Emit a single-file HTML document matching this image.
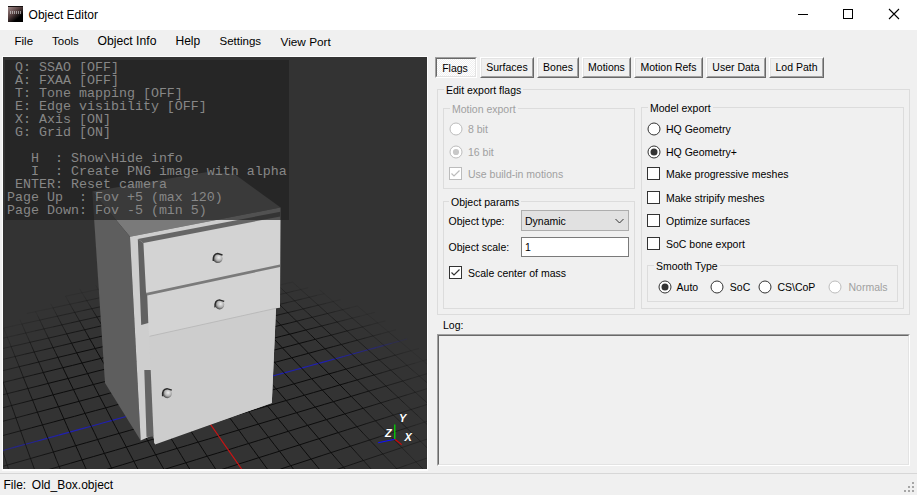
<!DOCTYPE html><html><head><meta charset="utf-8"><style>
html,body{margin:0;padding:0;width:917px;height:495px;overflow:hidden;background:#f0f0f0;font-family:"Liberation Sans", sans-serif}
.t{position:absolute;white-space:pre;font-family:"Liberation Sans", sans-serif}
</style></head><body><div style="position:absolute;left:0px;top:0px;width:917px;height:30px;background:#fff"></div><div style="position:absolute;left:8px;top:6px;width:15px;height:16px;background:linear-gradient(140deg,#a48c8c 0%,#5a4444 38%,#000 72%);border-top:1px solid #151010;box-sizing:border-box"></div><div style="position:absolute;left:10px;top:11px;width:12px;height:3px;background:repeating-linear-gradient(90deg,#ddd 0 1px,transparent 1px 2px,#ddd 2px 3px,transparent 3px 4px);opacity:.6"></div><div class="t" style="left:28.60px;top:7.84px;font-size:12px;line-height:14.40px;color:#000;">Object Editor</div><div style="position:absolute;left:798px;top:14px;width:10px;height:1px;background:#000"></div><div style="position:absolute;left:843px;top:9px;width:8px;height:8px;border:1px solid #000"></div><svg style="position:absolute;left:888px;top:8px" width="12" height="12"><path d="M1 1 L11 11 M11 1 L1 11" stroke="#000" stroke-width="1.1"/></svg><div style="position:absolute;left:0px;top:30px;width:917px;height:27px;background:#f0f0f0"></div><div class="t" style="left:14.50px;top:34.92px;font-size:11.5px;line-height:13.80px;color:#000;">File</div><div class="t" style="left:52.00px;top:34.92px;font-size:11.5px;line-height:13.80px;color:#000;">Tools</div><div class="t" style="left:97.50px;top:34.25px;font-size:12.2px;line-height:14.64px;color:#000;">Object Info</div><div class="t" style="left:175.50px;top:34.44px;font-size:12px;line-height:14.40px;color:#000;">Help</div><div class="t" style="left:219.50px;top:34.92px;font-size:11.5px;line-height:13.80px;color:#000;">Settings</div><div class="t" style="left:280.50px;top:34.63px;font-size:11.8px;line-height:14.16px;color:#000;">View Port</div><div style="position:absolute;left:2px;top:56px;width:426px;height:415px;background:#fcfcfc"></div><svg style="position:absolute;left:3px;top:57px" width="424" height="412" viewBox="3 57 424 412"><rect x="3" y="57" width="424" height="412" fill="#333"/><path d="M407.2 338.9L399.5 341.1" stroke="#2020b0" stroke-opacity="0.10" stroke-width="1.1" fill="none"/><path d="M399.5 341.1L391.7 343.2" stroke="#2020b0" stroke-opacity="0.20" stroke-width="1.1" fill="none"/><path d="M391.7 343.2L383.9 345.4" stroke="#2020b0" stroke-opacity="0.30" stroke-width="1.1" fill="none"/><path d="M383.9 345.4L376.0 347.6" stroke="#2020b0" stroke-opacity="0.40" stroke-width="1.1" fill="none"/><path d="M376.0 347.6L368.0 349.8" stroke="#2020b0" stroke-opacity="0.50" stroke-width="1.1" fill="none"/><path d="M368.0 349.8L359.9 352.0M14.1 447.4L2.6 450.6" stroke="#2020b0" stroke-opacity="0.60" stroke-width="1.1" fill="none"/><path d="M359.9 352.0L351.8 354.2M25.4 444.3L14.1 447.4" stroke="#2020b0" stroke-opacity="0.70" stroke-width="1.1" fill="none"/><path d="M351.8 354.2L343.6 356.5M36.7 441.2L25.4 444.3" stroke="#2020b0" stroke-opacity="0.80" stroke-width="1.1" fill="none"/><path d="M343.6 356.5L335.4 358.8M335.4 358.8L327.0 361.1M58.8 435.1L47.8 438.1M47.8 438.1L36.7 441.2" stroke="#2020b0" stroke-opacity="0.90" stroke-width="1.1" fill="none"/><path d="M327.0 361.1L318.6 363.4M318.6 363.4L310.1 365.7M310.1 365.7L301.6 368.1M301.6 368.1L292.9 370.5M292.9 370.5L284.2 372.9M284.2 372.9L275.4 375.3M275.4 375.3L266.5 377.8M266.5 377.8L257.5 380.2M257.5 380.2L248.5 382.7M248.5 382.7L239.4 385.3M239.4 385.3L230.1 387.8M230.1 387.8L220.8 390.4M220.8 390.4L211.4 393.0M211.4 393.0L201.9 395.6M201.9 395.6L192.3 398.2M192.3 398.2L182.7 400.9M182.7 400.9L172.9 403.6M172.9 403.6L163.0 406.3M163.0 406.3L153.1 409.1M153.1 409.1L143.0 411.9M143.0 411.9L132.9 414.7M132.9 414.7L122.6 417.5M122.6 417.5L112.2 420.4M112.2 420.4L101.8 423.2M101.8 423.2L91.2 426.2M91.2 426.2L80.5 429.1M80.5 429.1L69.7 432.1M69.7 432.1L58.8 435.1" stroke="#2020b0" stroke-opacity="1.00" stroke-width="1.1" fill="none"/><path d="M176.1 272.9L168.5 274.5M168.5 274.5L161.0 276.1M161.0 276.1L153.3 277.7M153.3 277.7L145.7 279.3M145.7 279.3L137.9 280.9M137.9 280.9L130.1 282.6M114.3 285.9L106.4 287.6M106.4 287.6L98.3 289.3M98.3 289.3L90.2 291.0M90.2 291.0L82.0 292.8M82.0 292.8L73.8 294.5M73.8 294.5L65.5 296.2M357.4 306.0L362.3 310.1M362.3 310.1L367.3 314.3M367.3 314.3L372.5 318.5M372.5 318.5L377.7 322.9M377.7 322.9L383.0 327.3M383.0 327.3L388.4 331.8M399.5 341.1L405.2 345.8M405.2 345.8L411.0 350.7M411.0 350.7L417.0 355.7M417.0 355.7L423.0 360.7M423.0 360.7L429.2 365.9M219.4 272.0L212.1 273.5M212.1 273.5L204.7 275.1M204.7 275.1L197.3 276.7M53.0 307.9L44.3 309.7M44.3 309.7L35.6 311.6M35.6 311.6L26.9 313.5M319.7 289.9L324.1 293.7M324.1 293.7L328.6 297.6M328.6 297.6L333.2 301.5M248.3 274.2L241.0 275.8M241.0 275.8L233.7 277.4M21.9 324.0L12.8 326.0M12.8 326.0L3.7 328.0M292.6 282.1L296.7 285.8M296.7 285.8L300.8 289.5M270.2 278.1L262.9 279.7M270.2 278.1L274.1 281.7M292.6 282.1L285.3 283.7M285.3 283.7L278.0 285.4M248.3 274.2L251.9 277.8M251.9 277.8L255.6 281.4M308.1 287.8L300.8 289.5M230.2 273.9L233.7 277.4M324.1 293.7L316.8 295.4M212.1 273.5L215.4 277.1M340.5 299.7L333.2 301.5M194.1 273.2L197.3 276.7M357.4 306.0L350.0 307.8M176.1 272.9L179.1 276.4M374.8 312.4L367.3 314.3M367.3 314.3L359.9 316.2M158.1 272.5L161.0 276.1M161.0 276.1L163.9 279.6M385.2 320.9L377.7 322.9M142.9 275.7L145.7 279.3M396.0 329.8L388.4 331.8M127.4 279.0L130.1 282.6M418.8 348.5L411.0 350.7M95.9 285.6L98.3 289.3M430.9 358.4L423.0 360.7M423.0 360.7L415.1 363.1M79.7 288.9L82.0 292.8M82.0 292.8L84.4 296.6M65.5 296.2L67.8 300.2M50.8 303.8L53.0 307.9M35.6 311.6L37.7 315.8M19.9 319.7L21.9 324.0M3.7 328.0L5.5 332.6M5.5 332.6L7.3 337.2" stroke="#0c0c0c" stroke-opacity="0.10" stroke-width="1.0" fill="none"/><path d="M130.1 282.6L122.3 284.2M122.3 284.2L114.3 285.9M388.4 331.8L393.9 336.4M393.9 336.4L399.5 341.1M197.3 276.7L189.7 278.4M189.7 278.4L182.2 280.0M182.2 280.0L174.6 281.6M78.5 302.4L70.0 304.2M70.0 304.2L61.5 306.0M61.5 306.0L53.0 307.9M333.2 301.5L337.8 305.6M337.8 305.6L342.6 309.7M342.6 309.7L347.4 313.9M413.1 370.7L419.3 376.0M419.3 376.0L425.6 381.5M425.6 381.5L432.1 387.1M233.7 277.4L226.3 279.0M226.3 279.0L218.8 280.7M39.8 320.1L30.8 322.1M30.8 322.1L21.9 324.0M300.8 289.5L305.1 293.3M305.1 293.3L309.4 297.2M262.9 279.7L255.6 281.4M255.6 281.4L248.3 283.0M16.6 335.1L7.3 337.2M7.3 337.2L-2.1 339.3M274.1 281.7L278.0 285.4M278.0 285.4L282.0 289.1M278.0 285.4L270.7 287.1M255.6 281.4L259.4 285.0M300.8 289.5L293.5 291.2M233.7 277.4L237.2 281.0M316.8 295.4L309.4 297.2M215.4 277.1L218.8 280.7M333.2 301.5L325.8 303.4M197.3 276.7L200.5 280.3M350.0 307.8L342.6 309.7M179.1 276.4L182.2 280.0M359.9 316.2L352.3 318.1M163.9 279.6L166.9 283.3M377.7 322.9L370.1 324.9M145.7 279.3L148.5 282.9M388.4 331.8L380.7 333.9M130.1 282.6L132.8 286.3M411.0 350.7L403.2 352.9M98.3 289.3L100.8 293.1M415.1 363.1L407.0 365.4M84.4 296.6L86.8 300.6M427.5 373.6L419.3 376.0M67.8 300.2L70.0 304.2M432.1 387.1L423.8 389.7M53.0 307.9L55.2 312.0M37.7 315.8L39.8 320.1M21.9 324.0L23.8 328.5M7.3 337.2L9.2 341.8M434.9 455.4L425.5 458.6" stroke="#0c0c0c" stroke-opacity="0.20" stroke-width="1.0" fill="none"/><path d="M174.6 281.6L166.9 283.3M166.9 283.3L159.2 285.0M159.2 285.0L151.4 286.6M151.4 286.6L143.5 288.3M143.5 288.3L135.6 290.0M135.6 290.0L127.6 291.8M127.6 291.8L119.6 293.5M119.6 293.5L111.5 295.2M111.5 295.2L103.3 297.0M103.3 297.0L95.1 298.8M95.1 298.8L86.8 300.6M86.8 300.6L78.5 302.4M347.4 313.9L352.3 318.1M352.3 318.1L357.3 322.4M357.3 322.4L362.5 326.9M362.5 326.9L367.7 331.4M367.7 331.4L373.0 335.9M373.0 335.9L378.4 340.6M378.4 340.6L383.9 345.4M383.9 345.4L389.5 350.2M389.5 350.2L395.2 355.2M395.2 355.2L401.1 360.2M401.1 360.2L407.0 365.4M407.0 365.4L413.1 370.7M218.8 280.7L211.4 282.3M211.4 282.3L203.8 284.0M57.4 316.2L48.6 318.1M48.6 318.1L39.8 320.1M309.4 297.2L313.8 301.2M313.8 301.2L318.3 305.2M415.3 392.3L421.8 398.1M421.8 398.1L428.5 404.0M248.3 283.0L240.9 284.7M240.9 284.7L233.4 286.4M35.0 330.9L25.8 333.0M25.8 333.0L16.6 335.1M282.0 289.1L286.1 293.0M286.1 293.0L290.3 296.8M417.8 415.7L424.6 422.1M424.6 422.1L431.6 428.6M270.7 287.1L263.3 288.8M11.1 346.6L1.6 348.8M259.4 285.0L263.3 288.8M420.5 441.3L427.6 448.3M293.5 291.2L286.1 293.0M286.1 293.0L278.7 294.7M5.3 358.8L-4.5 361.0M237.2 281.0L240.9 284.7M240.9 284.7L244.5 288.4M408.9 454.7L416.0 461.9M416.0 461.9L423.4 469.4M309.4 297.2L302.0 299.0M218.8 280.7L222.3 284.3M325.8 303.4L318.3 305.2M200.5 280.3L203.8 284.0M342.6 309.7L335.1 311.6M182.2 280.0L185.3 283.6M352.3 318.1L344.7 320.1M166.9 283.3L169.9 287.0M370.1 324.9L362.5 326.9M148.5 282.9L151.4 286.6M380.7 333.9L373.0 335.9M132.8 286.3L135.6 290.0M403.2 352.9L395.2 355.2M100.8 293.1L103.3 297.0M407.0 365.4L398.9 367.8M86.8 300.6L89.3 304.6M419.3 376.0L411.1 378.5M70.0 304.2L72.3 308.3M423.8 389.7L415.3 392.3M55.2 312.0L57.4 316.2M428.5 404.0L419.8 406.8M39.8 320.1L41.9 324.5M433.4 419.2L424.6 422.1M424.6 422.1L415.7 425.0M23.8 328.5L25.8 333.0M25.8 333.0L27.9 337.6M429.6 438.3L420.5 441.3M9.2 341.8L11.1 346.6M425.5 458.6L416.0 461.9M416.0 461.9L406.4 465.3" stroke="#0c0c0c" stroke-opacity="0.30" stroke-width="1.0" fill="none"/><path d="M203.8 284.0L196.2 285.7M196.2 285.7L188.5 287.3M188.5 287.3L180.8 289.0M83.3 310.5L74.7 312.4M74.7 312.4L66.1 314.3M66.1 314.3L57.4 316.2M318.3 305.2L322.9 309.3M322.9 309.3L327.5 313.5M327.5 313.5L332.3 317.7M396.7 375.5L402.8 381.0M402.8 381.0L409.0 386.6M409.0 386.6L415.3 392.3M233.4 286.4L225.8 288.1M225.8 288.1L218.2 289.8M53.0 326.9L44.0 328.9M44.0 328.9L35.0 330.9M290.3 296.8L294.5 300.8M294.5 300.8L298.8 304.8M404.6 403.5L411.1 409.5M411.1 409.5L417.8 415.7M263.3 288.8L255.8 290.5M255.8 290.5L248.3 292.2M30.0 342.3L20.6 344.5M20.6 344.5L11.1 346.6M263.3 288.8L267.2 292.6M267.2 292.6L271.2 296.5M406.6 427.9L413.5 434.6M413.5 434.6L420.5 441.3M278.7 294.7L271.2 296.5M15.1 356.5L5.3 358.8M244.5 288.4L248.3 292.2M401.8 447.6L408.9 454.7M302.0 299.0L294.5 300.8M294.5 300.8L287.0 302.6M9.3 369.1L-0.7 371.5M222.3 284.3L225.8 288.1M225.8 288.1L229.4 291.9M389.7 461.2L396.7 468.6M396.7 468.6L403.9 476.2M318.3 305.2L310.8 307.0M203.8 284.0L207.2 287.7M335.1 311.6L327.5 313.5M185.3 283.6L188.5 287.3M344.7 320.1L337.1 322.0M169.9 287.0L173.0 290.8M362.5 326.9L354.8 328.9M151.4 286.6L154.3 290.4M373.0 335.9L365.2 338.0M135.6 290.0L138.4 293.9M395.2 355.2L387.2 357.5M103.3 297.0L105.9 300.9M398.9 367.8L390.7 370.1M89.3 304.6L91.8 308.7M411.1 378.5L402.8 381.0M72.3 308.3L74.7 312.4M415.3 392.3L406.8 394.9M57.4 316.2L59.6 320.5M419.8 406.8L411.1 409.5M411.1 409.5L402.3 412.3M41.9 324.5L44.0 328.9M44.0 328.9L46.2 333.4M415.7 425.0L406.6 427.9M27.9 337.6L30.0 342.3M420.5 441.3L411.2 444.4M411.2 444.4L401.8 447.6M11.1 346.6L13.1 351.5M13.1 351.5L15.1 356.5M406.4 465.3L396.7 468.6M396.7 468.6L386.9 472.0" stroke="#0c0c0c" stroke-opacity="0.40" stroke-width="1.0" fill="none"/><path d="M180.8 289.0L173.0 290.8M173.0 290.8L165.2 292.5M165.2 292.5L157.3 294.2M157.3 294.2L149.3 296.0M149.3 296.0L141.3 297.7M141.3 297.7L133.2 299.5M133.2 299.5L125.0 301.3M125.0 301.3L116.8 303.1M116.8 303.1L108.5 305.0M108.5 305.0L100.2 306.8M100.2 306.8L91.8 308.7M91.8 308.7L83.3 310.5M332.3 317.7L337.1 322.0M337.1 322.0L342.0 326.4M342.0 326.4L347.0 330.9M347.0 330.9L352.1 335.5M352.1 335.5L357.3 340.2M357.3 340.2L362.6 344.9M362.6 344.9L368.0 349.8M368.0 349.8L373.5 354.7M373.5 354.7L379.1 359.8M379.1 359.8L384.8 364.9M384.8 364.9L390.7 370.1M390.7 370.1L396.7 375.5M218.2 289.8L210.6 291.5M210.6 291.5L202.9 293.2M70.8 322.9L61.9 324.9M61.9 324.9L53.0 326.9M298.8 304.8L303.2 308.9M303.2 308.9L307.7 313.0M392.0 391.7L398.3 397.5M398.3 397.5L404.6 403.5M248.3 292.2L240.7 294.0M240.7 294.0L233.1 295.7M48.5 338.1L39.3 340.2M39.3 340.2L30.0 342.3M271.2 296.5L275.2 300.4M275.2 300.4L279.4 304.4M393.4 415.1L400.0 421.5M400.0 421.5L406.6 427.9M271.2 296.5L263.6 298.2M24.7 354.2L15.1 356.5M248.3 292.2L252.1 296.1M395.0 440.7L401.8 447.6M287.0 302.6L279.4 304.4M19.2 366.7L9.3 369.1M229.4 291.9L233.1 295.7M382.8 454.0L389.7 461.2M310.8 307.0L303.2 308.9M303.2 308.9L295.6 310.8M13.4 379.9L3.2 382.4M3.2 382.4L-7.1 384.9M207.2 287.7L210.6 291.5M210.6 291.5L214.1 295.3M370.1 467.9L377.0 475.5M327.5 313.5L319.9 315.4M319.9 315.4L312.2 317.3M7.2 393.7L-3.2 396.3M188.5 287.3L191.8 291.1M191.8 291.1L195.1 295.0M337.1 322.0L329.4 324.0M173.0 290.8L176.2 294.6M354.8 328.9L347.0 330.9M154.3 290.4L157.3 294.2M365.2 338.0L357.3 340.2M138.4 293.9L141.3 297.7M387.2 357.5L379.1 359.8M7.2 465.1L-4.7 468.4M105.9 300.9L108.5 305.0M390.7 370.1L382.4 372.6M91.8 308.7L94.3 312.8M402.8 381.0L394.4 383.5M394.4 383.5L385.9 386.0M74.7 312.4L77.1 316.6M77.1 316.6L79.6 320.9M406.8 394.9L398.3 397.5M398.3 397.5L389.6 400.2M59.6 320.5L61.9 324.9M61.9 324.9L64.3 329.3M402.3 412.3L393.4 415.1M46.2 333.4L48.5 338.1M406.6 427.9L397.5 430.9M30.0 342.3L32.1 347.1M401.8 447.6L392.4 450.8M392.4 450.8L382.8 454.0M15.1 356.5L17.1 361.5M17.1 361.5L19.2 366.7M1.2 376.9L3.2 382.4M3.2 382.4L5.2 388.0M2.6 450.6L4.9 457.8M4.9 457.8L7.2 465.1M7.2 465.1L9.6 472.6" stroke="#0c0c0c" stroke-opacity="0.50" stroke-width="1.0" fill="none"/><path d="M202.9 293.2L195.1 295.0M195.1 295.0L187.3 296.7M187.3 296.7L179.4 298.5M96.9 317.0L88.2 319.0M88.2 319.0L79.6 320.9M79.6 320.9L70.8 322.9M307.7 313.0L312.2 317.3M312.2 317.3L316.8 321.6M316.8 321.6L321.6 326.0M374.1 375.0L379.9 380.4M379.9 380.4L385.9 386.0M385.9 386.0L392.0 391.7M233.1 295.7L225.4 297.5M225.4 297.5L217.6 299.3M66.7 333.9L57.6 336.0M57.6 336.0L48.5 338.1M279.4 304.4L283.6 308.5M283.6 308.5L287.9 312.6M380.8 402.9L387.1 408.9M387.1 408.9L393.4 415.1M263.6 298.2L256.0 300.0M256.0 300.0L248.3 301.8M43.7 349.8L34.2 352.0M34.2 352.0L24.7 354.2M252.1 296.1L256.0 300.0M256.0 300.0L260.0 304.0M381.8 427.3L388.3 433.9M388.3 433.9L395.0 440.7M279.4 304.4L271.7 306.2M29.0 364.4L19.2 366.7M233.1 295.7L236.8 299.6M376.2 446.9L382.8 454.0M295.6 310.8L287.9 312.6M23.4 377.4L13.4 379.9M214.1 295.3L217.6 299.3M363.4 460.5L370.1 467.9M312.2 317.3L304.5 319.2M17.6 391.1L7.2 393.7M195.1 295.0L198.5 298.9M329.4 324.0L321.6 326.0M11.5 405.5L0.8 408.3M176.2 294.6L179.4 298.5M347.0 330.9L339.2 333.0M339.2 333.0L331.3 335.1M15.9 417.9L5.0 420.7M5.0 420.7L-6.0 423.6M157.3 294.2L160.3 298.1M160.3 298.1L163.4 302.1M357.3 340.2L349.4 342.3M9.4 433.8L-1.8 436.8M141.3 297.7L144.2 301.7M379.1 359.8L371.0 362.1M371.0 362.1L362.7 364.4M30.5 458.5L18.9 461.8M18.9 461.8L7.2 465.1M108.5 305.0L111.2 309.0M111.2 309.0L113.9 313.2M382.4 372.6L374.1 375.0M94.3 312.8L96.9 317.0M385.9 386.0L377.4 388.6M79.6 320.9L82.0 325.3M389.6 400.2L380.8 402.9M64.3 329.3L66.7 333.9M393.4 415.1L384.5 418.0M48.5 338.1L50.8 342.8M397.5 430.9L388.3 433.9M388.3 433.9L379.0 436.9M32.1 347.1L34.2 352.0M34.2 352.0L36.4 357.0M382.8 454.0L373.2 457.2M373.2 457.2L363.4 460.5M19.2 366.7L21.3 372.0M21.3 372.0L23.4 377.4M5.2 388.0L7.2 393.7M7.2 393.7L9.3 399.5M9.3 399.5L11.5 405.5" stroke="#0c0c0c" stroke-opacity="0.60" stroke-width="1.0" fill="none"/><path d="M179.4 298.5L171.4 300.3M171.4 300.3L163.4 302.1M163.4 302.1L155.3 303.9M155.3 303.9L147.2 305.7M147.2 305.7L139.0 307.6M139.0 307.6L130.7 309.4M130.7 309.4L122.3 311.3M122.3 311.3L113.9 313.2M113.9 313.2L105.4 315.1M105.4 315.1L96.9 317.0M321.6 326.0L326.4 330.5M326.4 330.5L331.3 335.1M331.3 335.1L336.3 339.7M336.3 339.7L341.3 344.5M341.3 344.5L346.5 349.3M346.5 349.3L351.8 354.2M351.8 354.2L357.2 359.3M357.2 359.3L362.7 364.4M362.7 364.4L368.3 369.6M368.3 369.6L374.1 375.0M217.6 299.3L209.8 301.1M209.8 301.1L201.9 302.9M84.6 329.8L75.7 331.8M75.7 331.8L66.7 333.9M287.9 312.6L292.2 316.9M292.2 316.9L296.7 321.2M368.7 391.1L374.7 396.9M374.7 396.9L380.8 402.9M248.3 301.8L240.6 303.6M240.6 303.6L232.8 305.5M62.4 345.4L53.1 347.6M53.1 347.6L43.7 349.8M260.0 304.0L264.0 308.1M264.0 308.1L268.1 312.2M369.2 414.5L375.4 420.8M375.4 420.8L381.8 427.3M271.7 306.2L264.0 308.1M264.0 308.1L256.2 310.0M48.3 359.7L38.7 362.0M38.7 362.0L29.0 364.4M236.8 299.6L240.6 303.6M240.6 303.6L244.4 307.7M363.2 433.3L369.6 440.0M369.6 440.0L376.2 446.9M287.9 312.6L280.1 314.5M33.4 374.9L23.4 377.4M217.6 299.3L221.2 303.2M356.9 453.3L363.4 460.5M304.5 319.2L296.7 321.2M27.9 388.5L17.6 391.1M198.5 298.9L201.9 302.9M343.6 467.2L350.1 474.7M321.6 326.0L313.7 328.0M22.1 402.8L11.5 405.5M179.4 298.5L182.6 302.5M331.3 335.1L323.3 337.1M26.7 415.0L15.9 417.9M163.4 302.1L166.5 306.1M349.4 342.3L341.3 344.5M20.6 430.8L9.4 433.8M144.2 301.7L147.2 305.7M362.7 364.4L354.4 366.7M42.0 455.2L30.5 458.5M113.9 313.2L116.7 317.4M374.1 375.0L365.7 377.4M96.9 317.0L99.5 321.3M377.4 388.6L368.7 391.1M82.0 325.3L84.6 329.8M380.8 402.9L372.0 405.6M66.7 333.9L69.1 338.5M384.5 418.0L375.4 420.8M375.4 420.8L366.2 423.7M50.8 342.8L53.1 347.6M53.1 347.6L55.5 352.5M379.0 436.9L369.6 440.0M369.6 440.0L360.1 443.1M36.4 357.0L38.7 362.0M38.7 362.0L41.0 367.2M363.4 460.5L353.6 463.8M353.6 463.8L343.6 467.2M23.4 377.4L25.6 382.9M25.6 382.9L27.9 388.5M11.5 405.5L13.7 411.6M13.7 411.6L15.9 417.9M15.9 417.9L18.2 424.3M18.2 424.3L20.6 430.8M20.6 430.8L23.0 437.5M23.0 437.5L25.4 444.3M25.4 444.3L27.9 451.3M27.9 451.3L30.5 458.5M30.5 458.5L33.2 465.8M33.2 465.8L35.9 473.3" stroke="#0c0c0c" stroke-opacity="0.70" stroke-width="1.0" fill="none"/><path d="M201.9 302.9L194.0 304.7M194.0 304.7L186.0 306.5M186.0 306.5L177.9 308.4M110.9 323.7L102.2 325.7M102.2 325.7L93.4 327.7M93.4 327.7L84.6 329.8M296.7 321.2L301.2 325.6M301.2 325.6L305.8 330.0M305.8 330.0L310.5 334.6M351.5 374.5L357.2 379.9M357.2 379.9L362.9 385.5M362.9 385.5L368.7 391.1M232.8 305.5L224.9 307.3M71.6 343.2L62.4 345.4M268.1 312.2L272.3 316.5M363.1 408.3L369.2 414.5M256.2 310.0L248.3 311.8M57.9 357.4L48.3 359.7M244.4 307.7L248.3 311.8M357.0 426.7L363.2 433.3M280.1 314.5L272.3 316.5M43.3 372.5L33.4 374.9M221.2 303.2L224.9 307.3M350.5 446.2L356.9 453.3M296.7 321.2L288.8 323.2M38.1 386.0L27.9 388.5M201.9 302.9L205.4 306.9M337.2 459.8L343.6 467.2M313.7 328.0L305.8 330.0M32.6 400.1L22.1 402.8M182.6 302.5L186.0 306.5M323.3 337.1L315.3 339.3M37.4 412.2L26.7 415.0M166.5 306.1L169.7 310.2M341.3 344.5L333.3 346.6M31.6 427.8L20.6 430.8M147.2 305.7L150.2 309.8M354.4 366.7L346.0 369.1M53.4 452.0L42.0 455.2M116.7 317.4L119.5 321.8M365.7 377.4L357.2 379.9M59.2 466.5L47.6 469.9M99.5 321.3L102.2 325.7M368.7 391.1L360.0 393.7M84.6 329.8L87.2 334.3M372.0 405.6L363.1 408.3M69.1 338.5L71.6 343.2M366.2 423.7L357.0 426.7M55.5 352.5L57.9 357.4M360.1 443.1L350.5 446.2M41.0 367.2L43.3 372.5M343.6 467.2L333.5 470.5M27.9 388.5L30.2 394.3M30.2 394.3L32.6 400.1M32.6 400.1L35.0 406.1M56.2 459.2L59.2 466.5M59.2 466.5L62.2 474.1" stroke="#0c0c0c" stroke-opacity="0.80" stroke-width="1.0" fill="none"/><path d="M177.9 308.4L169.7 310.2M169.7 310.2L161.5 312.1M161.5 312.1L153.3 314.0M153.3 314.0L144.9 315.9M144.9 315.9L136.5 317.9M136.5 317.9L128.0 319.8M128.0 319.8L119.5 321.8M119.5 321.8L110.9 323.7M310.5 334.6L315.3 339.3M315.3 339.3L320.1 344.0M320.1 344.0L325.1 348.8M325.1 348.8L330.2 353.7M330.2 353.7L335.4 358.8M335.4 358.8L340.7 363.9M340.7 363.9L346.0 369.1M346.0 369.1L351.5 374.5M224.9 307.3L217.0 309.2M217.0 309.2L209.0 311.0M209.0 311.0L200.9 312.9M98.8 336.9L89.8 339.0M89.8 339.0L80.7 341.1M80.7 341.1L71.6 343.2M272.3 316.5L276.5 320.8M276.5 320.8L280.8 325.1M280.8 325.1L285.2 329.6M345.5 390.6L351.2 396.4M351.2 396.4L357.1 402.3M357.1 402.3L363.1 408.3M248.3 311.8L240.4 313.7M240.4 313.7L232.4 315.6M76.7 352.9L67.3 355.2M67.3 355.2L57.9 357.4M248.3 311.8L252.3 316.1M252.3 316.1L256.4 320.3M344.9 413.9L350.9 420.2M350.9 420.2L357.0 426.7M272.3 316.5L264.4 318.4M264.4 318.4L256.4 320.3M62.9 367.7L53.1 370.1M53.1 370.1L43.3 372.5M224.9 307.3L228.6 311.4M228.6 311.4L232.4 315.6M338.2 432.6L344.3 439.3M344.3 439.3L350.5 446.2M288.8 323.2L280.8 325.1M48.2 383.4L38.1 386.0M205.4 306.9L209.0 311.0M331.0 452.6L337.2 459.8M305.8 330.0L297.8 332.1M42.9 397.5L32.6 400.1M186.0 306.5L189.3 310.6M317.1 466.4L323.3 474.0M315.3 339.3L307.2 341.4M48.0 409.4L37.4 412.2M169.7 310.2L173.0 314.4M333.3 346.6L325.1 348.8M325.1 348.8L316.9 351.0M53.3 422.0L42.5 424.9M42.5 424.9L31.6 427.8M150.2 309.8L153.3 314.0M153.3 314.0L156.4 318.3M346.0 369.1L337.6 371.5M64.6 448.8L53.4 452.0M119.5 321.8L122.4 326.2M357.2 379.9L348.6 382.4M70.7 463.2L59.2 466.5M102.2 325.7L104.9 330.2M360.0 393.7L351.2 396.4M87.2 334.3L89.8 339.0M363.1 408.3L354.0 411.1M354.0 411.1L344.9 413.9M71.6 343.2L74.1 348.0M74.1 348.0L76.7 352.9M357.0 426.7L347.6 429.6M347.6 429.6L338.2 432.6M57.9 357.4L60.3 362.5M60.3 362.5L62.9 367.7M350.5 446.2L340.8 449.4M340.8 449.4L331.0 452.6M331.0 452.6L321.1 455.8M43.3 372.5L45.7 377.9M45.7 377.9L48.2 383.4M48.2 383.4L50.7 389.1M85.3 467.3L88.7 474.8M35.0 406.1L37.4 412.2M37.4 412.2L39.9 418.5M39.9 418.5L42.5 424.9M42.5 424.9L45.1 431.4M45.1 431.4L47.8 438.1M47.8 438.1L50.6 445.0M50.6 445.0L53.4 452.0M53.4 452.0L56.2 459.2" stroke="#0c0c0c" stroke-opacity="0.90" stroke-width="1.0" fill="none"/><path d="M200.9 312.9L192.8 314.8M192.8 314.8L184.6 316.8M184.6 316.8L176.3 318.7M176.3 318.7L168.0 320.6M168.0 320.6L159.6 322.6M159.6 322.6L151.1 324.6M151.1 324.6L142.6 326.6M142.6 326.6L134.0 328.6M134.0 328.6L125.3 330.6M125.3 330.6L116.5 332.7M116.5 332.7L107.7 334.8M107.7 334.8L98.8 336.9M285.2 329.6L289.7 334.2M289.7 334.2L294.3 338.8M294.3 338.8L299.0 343.5M299.0 343.5L303.8 348.3M303.8 348.3L308.6 353.3M308.6 353.3L313.6 358.3M313.6 358.3L318.6 363.4M318.6 363.4L323.8 368.6M323.8 368.6L329.0 373.9M329.0 373.9L334.4 379.4M334.4 379.4L339.9 384.9M339.9 384.9L345.5 390.6M232.4 315.6L224.4 317.6M224.4 317.6L216.3 319.5M216.3 319.5L208.1 321.5M208.1 321.5L199.9 323.5M199.9 323.5L191.5 325.4M191.5 325.4L183.1 327.5M183.1 327.5L174.7 329.5M174.7 329.5L166.2 331.5M166.2 331.5L157.6 333.6M157.6 333.6L148.9 335.7M148.9 335.7L140.1 337.8M140.1 337.8L131.3 339.9M131.3 339.9L122.4 342.0M122.4 342.0L113.4 344.1M113.4 344.1L104.4 346.3M104.4 346.3L95.2 348.5M95.2 348.5L86.0 350.7M86.0 350.7L76.7 352.9M256.4 320.3L260.5 324.7M260.5 324.7L264.7 329.2M264.7 329.2L269.0 333.7M269.0 333.7L273.4 338.3M273.4 338.3L277.9 343.1M277.9 343.1L282.4 347.9M282.4 347.9L287.1 352.8M287.1 352.8L291.8 357.8M291.8 357.8L296.6 362.9M296.6 362.9L301.6 368.1M301.6 368.1L306.6 373.4M306.6 373.4L311.7 378.8M311.7 378.8L317.0 384.4M317.0 384.4L322.3 390.0M322.3 390.0L327.8 395.8M327.8 395.8L333.4 401.7M333.4 401.7L339.1 407.7M339.1 407.7L344.9 413.9M256.4 320.3L248.4 322.3M248.4 322.3L240.3 324.3M240.3 324.3L232.1 326.3M232.1 326.3L223.9 328.3M223.9 328.3L215.6 330.3M215.6 330.3L207.2 332.4M207.2 332.4L198.7 334.5M198.7 334.5L190.2 336.5M190.2 336.5L181.6 338.7M181.6 338.7L173.0 340.8M173.0 340.8L164.2 342.9M164.2 342.9L155.4 345.1M155.4 345.1L146.5 347.3M146.5 347.3L137.6 349.4M137.6 349.4L128.5 351.7M128.5 351.7L119.4 353.9M119.4 353.9L110.2 356.2M110.2 356.2L100.9 358.4M100.9 358.4L91.5 360.7M91.5 360.7L82.0 363.0M82.0 363.0L72.5 365.4M72.5 365.4L62.9 367.7M232.4 315.6L236.3 319.9M236.3 319.9L240.3 324.3M240.3 324.3L244.3 328.7M244.3 328.7L248.4 333.3M248.4 333.3L252.6 337.9M252.6 337.9L256.8 342.6M256.8 342.6L261.2 347.4M261.2 347.4L265.6 352.3M265.6 352.3L270.1 357.3M270.1 357.3L274.7 362.4M274.7 362.4L279.4 367.6M279.4 367.6L284.2 372.9M284.2 372.9L289.1 378.3M289.1 378.3L294.1 383.8M294.1 383.8L299.2 389.5M299.2 389.5L304.4 395.2M304.4 395.2L309.7 401.1M309.7 401.1L315.2 407.1M315.2 407.1L320.8 413.3M320.8 413.3L326.4 419.6M326.4 419.6L332.3 426.0M332.3 426.0L338.2 432.6M280.8 325.1L272.8 327.2M272.8 327.2L264.7 329.2M264.7 329.2L256.6 331.2M256.6 331.2L248.4 333.3M248.4 333.3L240.1 335.4M240.1 335.4L231.7 337.4M231.7 337.4L223.3 339.6M223.3 339.6L214.8 341.7M214.8 341.7L206.2 343.8M206.2 343.8L197.6 346.0M197.6 346.0L188.9 348.2M188.9 348.2L180.1 350.4M180.1 350.4L171.2 352.6M171.2 352.6L162.2 354.9M162.2 354.9L153.2 357.1M153.2 357.1L144.1 359.4M144.1 359.4L134.9 361.7M134.9 361.7L125.6 364.0M125.6 364.0L116.2 366.4M116.2 366.4L106.8 368.8M106.8 368.8L97.2 371.1M97.2 371.1L87.6 373.6M87.6 373.6L77.9 376.0M77.9 376.0L68.1 378.5M68.1 378.5L58.2 380.9M58.2 380.9L48.2 383.4M209.0 311.0L212.6 315.2M212.6 315.2L216.3 319.5M216.3 319.5L220.0 323.9M220.0 323.9L223.9 328.3M223.9 328.3L227.8 332.8M227.8 332.8L231.7 337.4M231.7 337.4L235.8 342.1M235.8 342.1L239.9 346.9M239.9 346.9L244.1 351.8M244.1 351.8L248.4 356.8M248.4 356.8L252.8 361.9M252.8 361.9L257.3 367.1M257.3 367.1L261.9 372.4M261.9 372.4L266.5 377.8M266.5 377.8L271.3 383.3M271.3 383.3L276.1 388.9M276.1 388.9L281.1 394.7M281.1 394.7L286.2 400.5M286.2 400.5L291.3 406.6M291.3 406.6L296.6 412.7M296.6 412.7L302.0 419.0M302.0 419.0L307.6 425.4M307.6 425.4L313.2 431.9M313.2 431.9L319.0 438.7M319.0 438.7L325.0 445.5M325.0 445.5L331.0 452.6M297.8 332.1L289.7 334.2M289.7 334.2L281.6 336.2M281.6 336.2L273.4 338.3M273.4 338.3L265.2 340.5M265.2 340.5L256.8 342.6M256.8 342.6L248.4 344.8M248.4 344.8L239.9 346.9M239.9 346.9L231.4 349.1M231.4 349.1L222.7 351.3M222.7 351.3L214.0 353.6M214.0 353.6L205.2 355.8M205.2 355.8L196.4 358.1M196.4 358.1L187.4 360.4M187.4 360.4L178.4 362.7M178.4 362.7L169.3 365.0M169.3 365.0L160.1 367.4M160.1 367.4L150.8 369.8M150.8 369.8L141.5 372.2M141.5 372.2L132.0 374.6M132.0 374.6L122.5 377.1M122.5 377.1L112.9 379.5M112.9 379.5L103.2 382.0M103.2 382.0L93.4 384.5M93.4 384.5L83.5 387.1M83.5 387.1L73.5 389.6M73.5 389.6L63.4 392.2M63.4 392.2L53.2 394.8M53.2 394.8L42.9 397.5M189.3 310.6L192.8 314.8M192.8 314.8L196.3 319.1M196.3 319.1L199.9 323.5M199.9 323.5L203.5 327.9M203.5 327.9L207.2 332.4M207.2 332.4L211.0 337.0M211.0 337.0L214.8 341.7M214.8 341.7L218.7 346.5M218.7 346.5L222.7 351.3M222.7 351.3L226.8 356.3M226.8 356.3L231.0 361.4M231.0 361.4L235.2 366.6M235.2 366.6L239.6 371.8M239.6 371.8L244.0 377.2M244.0 377.2L248.5 382.7M248.5 382.7L253.1 388.4M253.1 388.4L257.8 394.1M257.8 394.1L262.6 400.0M262.6 400.0L267.5 406.0M267.5 406.0L272.6 412.1M272.6 412.1L277.7 418.3M277.7 418.3L283.0 424.8M283.0 424.8L288.3 431.3M288.3 431.3L293.8 438.0M293.8 438.0L299.5 444.9M299.5 444.9L305.2 451.9M305.2 451.9L311.1 459.1M311.1 459.1L317.1 466.4M307.2 341.4L299.0 343.5M299.0 343.5L290.8 345.7M290.8 345.7L282.4 347.9M282.4 347.9L274.1 350.1M274.1 350.1L265.6 352.3M265.6 352.3L257.1 354.5M257.1 354.5L248.4 356.8M248.4 356.8L239.7 359.1M239.7 359.1L231.0 361.4M231.0 361.4L222.1 363.7M222.1 363.7L213.2 366.1M213.2 366.1L204.2 368.4M204.2 368.4L195.1 370.8M195.1 370.8L185.9 373.2M185.9 373.2L176.7 375.7M176.7 375.7L167.3 378.1M167.3 378.1L157.9 380.6M157.9 380.6L148.4 383.1M148.4 383.1L138.8 385.6M138.8 385.6L129.0 388.2M129.0 388.2L119.3 390.7M119.3 390.7L109.4 393.3M109.4 393.3L99.4 396.0M99.4 396.0L89.3 398.6M89.3 398.6L79.1 401.3M79.1 401.3L68.9 404.0M68.9 404.0L58.5 406.7M58.5 406.7L48.0 409.4M173.0 314.4L176.3 318.7M176.3 318.7L179.7 323.0M179.7 323.0L183.1 327.5M183.1 327.5L186.7 332.0M186.7 332.0L190.2 336.5M190.2 336.5L193.9 341.2M193.9 341.2L197.6 346.0M197.6 346.0L201.4 350.9M201.4 350.9L205.2 355.8M205.2 355.8L209.2 360.9M209.2 360.9L213.2 366.1M213.2 366.1L217.3 371.3M217.3 371.3L221.5 376.7M221.5 376.7L225.8 382.2M225.8 382.2L230.1 387.8M230.1 387.8L234.6 393.5M234.6 393.5L239.1 399.4M239.1 399.4L243.8 405.4M243.8 405.4L248.6 411.5M248.6 411.5L253.4 417.7M253.4 417.7L258.4 424.1M258.4 424.1L263.5 430.7M263.5 430.7L268.7 437.3M268.7 437.3L274.0 444.2M274.0 444.2L279.5 451.2M279.5 451.2L285.0 458.3M285.0 458.3L290.8 465.7M290.8 465.7L296.6 473.2M316.9 351.0L308.6 353.3M308.6 353.3L300.3 355.5M300.3 355.5L291.8 357.8M291.8 357.8L283.3 360.1M283.3 360.1L274.7 362.4M274.7 362.4L266.0 364.7M266.0 364.7L257.3 367.1M257.3 367.1L248.5 369.5M248.5 369.5L239.6 371.8M239.6 371.8L230.6 374.3M230.6 374.3L221.5 376.7M221.5 376.7L212.3 379.2M212.3 379.2L203.1 381.7M203.1 381.7L193.8 384.2M193.8 384.2L184.3 386.7M184.3 386.7L174.8 389.3M174.8 389.3L165.2 391.9M165.2 391.9L155.5 394.5M155.5 394.5L145.8 397.1M145.8 397.1L135.9 399.8M135.9 399.8L125.9 402.4M125.9 402.4L115.8 405.1M115.8 405.1L105.7 407.9M105.7 407.9L95.4 410.6M95.4 410.6L85.0 413.4M85.0 413.4L74.6 416.3M74.6 416.3L64.0 419.1M64.0 419.1L53.3 422.0M156.4 318.3L159.6 322.6M159.6 322.6L162.8 327.0M162.8 327.0L166.2 331.5M166.2 331.5L169.5 336.1M169.5 336.1L173.0 340.8M173.0 340.8L176.5 345.5M176.5 345.5L180.1 350.4M180.1 350.4L183.7 355.3M183.7 355.3L187.4 360.4M187.4 360.4L191.2 365.6M191.2 365.6L195.1 370.8M195.1 370.8L199.1 376.2M199.1 376.2L203.1 381.7M203.1 381.7L207.2 387.3M207.2 387.3L211.4 393.0M211.4 393.0L215.7 398.8M215.7 398.8L220.1 404.8M220.1 404.8L224.6 410.9M224.6 410.9L229.2 417.1M229.2 417.1L233.9 423.5M233.9 423.5L238.7 430.0M238.7 430.0L243.6 436.7M243.6 436.7L248.6 443.5M248.6 443.5L253.8 450.5M253.8 450.5L259.0 457.6M259.0 457.6L264.4 465.0M264.4 465.0L270.0 472.5M337.6 371.5L329.0 373.9M329.0 373.9L320.4 376.4M320.4 376.4L311.7 378.8M311.7 378.8L303.0 381.3M303.0 381.3L294.1 383.8M294.1 383.8L285.2 386.4M285.2 386.4L276.1 388.9M276.1 388.9L267.0 391.5M267.0 391.5L257.8 394.1M257.8 394.1L248.5 396.7M248.5 396.7L239.1 399.4M239.1 399.4L229.7 402.1M229.7 402.1L220.1 404.8M220.1 404.8L210.5 407.5M210.5 407.5L200.7 410.3M200.7 410.3L190.9 413.1M190.9 413.1L180.9 415.9M180.9 415.9L170.9 418.7M170.9 418.7L160.7 421.6M160.7 421.6L150.5 424.5M150.5 424.5L140.1 427.4M140.1 427.4L129.7 430.4M129.7 430.4L119.1 433.4M119.1 433.4L108.4 436.4M108.4 436.4L97.6 439.5M97.6 439.5L86.7 442.6M86.7 442.6L75.7 445.7M75.7 445.7L64.6 448.8M122.4 326.2L125.3 330.6M125.3 330.6L128.3 335.2M128.3 335.2L131.3 339.9M131.3 339.9L134.4 344.6M134.4 344.6L137.6 349.4M137.6 349.4L140.8 354.4M140.8 354.4L144.1 359.4M144.1 359.4L147.4 364.5M147.4 364.5L150.8 369.8M150.8 369.8L154.3 375.1M154.3 375.1L157.9 380.6M157.9 380.6L161.5 386.2M161.5 386.2L165.2 391.9M165.2 391.9L169.0 397.7M169.0 397.7L172.9 403.6M172.9 403.6L176.9 409.7M176.9 409.7L180.9 415.9M180.9 415.9L185.1 422.2M185.1 422.2L189.3 428.7M189.3 428.7L193.6 435.4M193.6 435.4L198.1 442.1M198.1 442.1L202.6 449.1M202.6 449.1L207.2 456.2M207.2 456.2L212.0 463.5M212.0 463.5L216.9 471.0M348.6 382.4L339.9 384.9M339.9 384.9L331.2 387.5M331.2 387.5L322.3 390.0M322.3 390.0L313.4 392.6M313.4 392.6L304.4 395.2M304.4 395.2L295.3 397.9M295.3 397.9L286.2 400.5M286.2 400.5L276.9 403.2M276.9 403.2L267.5 406.0M267.5 406.0L258.1 408.7M258.1 408.7L248.6 411.5M248.6 411.5L238.9 414.3M238.9 414.3L229.2 417.1M229.2 417.1L219.4 420.0M219.4 420.0L209.4 422.9M209.4 422.9L199.4 425.8M199.4 425.8L189.3 428.7M189.3 428.7L179.1 431.7M179.1 431.7L168.7 434.7M168.7 434.7L158.3 437.7M158.3 437.7L147.7 440.8M147.7 440.8L137.1 443.9M137.1 443.9L126.3 447.0M126.3 447.0L115.4 450.2M115.4 450.2L104.4 453.4M104.4 453.4L93.3 456.6M93.3 456.6L82.0 459.9M82.0 459.9L70.7 463.2M104.9 330.2L107.7 334.8M107.7 334.8L110.5 339.4M110.5 339.4L113.4 344.1M113.4 344.1L116.4 349.0M116.4 349.0L119.4 353.9M119.4 353.9L122.5 358.9M122.5 358.9L125.6 364.0M125.6 364.0L128.8 369.3M128.8 369.3L132.0 374.6M132.0 374.6L135.4 380.1M135.4 380.1L138.8 385.6M138.8 385.6L142.2 391.3M142.2 391.3L145.8 397.1M145.8 397.1L149.4 403.0M149.4 403.0L153.1 409.1M153.1 409.1L156.9 415.3M156.9 415.3L160.7 421.6M160.7 421.6L164.7 428.1M164.7 428.1L168.7 434.7M168.7 434.7L172.9 441.5M172.9 441.5L177.1 448.4M177.1 448.4L181.4 455.5M181.4 455.5L185.9 462.8M185.9 462.8L190.4 470.2M351.2 396.4L342.3 399.0M342.3 399.0L333.4 401.7M333.4 401.7L324.3 404.4M324.3 404.4L315.2 407.1M315.2 407.1L306.0 409.9M306.0 409.9L296.6 412.7M296.6 412.7L287.2 415.5M287.2 415.5L277.7 418.3M277.7 418.3L268.1 421.2M268.1 421.2L258.4 424.1M258.4 424.1L248.6 427.0M248.6 427.0L238.7 430.0M238.7 430.0L228.7 433.0M228.7 433.0L218.6 436.0M218.6 436.0L208.4 439.1M208.4 439.1L198.1 442.1M198.1 442.1L187.6 445.3M187.6 445.3L177.1 448.4M177.1 448.4L166.5 451.6M166.5 451.6L155.7 454.8M155.7 454.8L144.8 458.1M144.8 458.1L133.8 461.3M133.8 461.3L122.7 464.7M122.7 464.7L111.5 468.0M111.5 468.0L100.1 471.4M89.8 339.0L92.5 343.7M92.5 343.7L95.2 348.5M95.2 348.5L98.0 353.4M98.0 353.4L100.9 358.4M100.9 358.4L103.8 363.5M103.8 363.5L106.8 368.8M106.8 368.8L109.8 374.1M109.8 374.1L112.9 379.5M112.9 379.5L116.0 385.1M116.0 385.1L119.3 390.7M119.3 390.7L122.5 396.5M122.5 396.5L125.9 402.4M125.9 402.4L129.3 408.5M129.3 408.5L132.9 414.7M132.9 414.7L136.5 421.0M136.5 421.0L140.1 427.4M140.1 427.4L143.9 434.0M143.9 434.0L147.7 440.8M147.7 440.8L151.7 447.7M151.7 447.7L155.7 454.8M155.7 454.8L159.8 462.1M159.8 462.1L164.0 469.5M344.9 413.9L335.7 416.7M335.7 416.7L326.4 419.6M326.4 419.6L317.1 422.5M317.1 422.5L307.6 425.4M307.6 425.4L298.0 428.3M298.0 428.3L288.3 431.3M288.3 431.3L278.6 434.3M278.6 434.3L268.7 437.3M268.7 437.3L258.7 440.4M258.7 440.4L248.6 443.5M248.6 443.5L238.4 446.6M238.4 446.6L228.2 449.8M228.2 449.8L217.8 453.0M217.8 453.0L207.2 456.2M207.2 456.2L196.6 459.5M196.6 459.5L185.9 462.8M185.9 462.8L175.0 466.1M175.0 466.1L164.0 469.5M76.7 352.9L79.4 357.9M79.4 357.9L82.0 363.0M82.0 363.0L84.8 368.2M84.8 368.2L87.6 373.6M87.6 373.6L90.4 379.0M90.4 379.0L93.4 384.5M93.4 384.5L96.3 390.2M96.3 390.2L99.4 396.0M99.4 396.0L102.5 401.9M102.5 401.9L105.7 407.9M105.7 407.9L108.9 414.0M108.9 414.0L112.2 420.4M112.2 420.4L115.6 426.8M115.6 426.8L119.1 433.4M119.1 433.4L122.7 440.1M122.7 440.1L126.3 447.0M126.3 447.0L130.0 454.1M130.0 454.1L133.8 461.3M133.8 461.3L137.7 468.8M137.7 468.8L141.7 476.3M338.2 432.6L328.7 435.6M328.7 435.6L319.0 438.7M319.0 438.7L309.3 441.7M309.3 441.7L299.5 444.9M299.5 444.9L289.5 448.0M289.5 448.0L279.5 451.2M279.5 451.2L269.3 454.4M269.3 454.4L259.0 457.6M259.0 457.6L248.7 460.9M248.7 460.9L238.2 464.2M238.2 464.2L227.6 467.6M227.6 467.6L216.9 471.0M62.9 367.7L65.4 373.0M65.4 373.0L68.1 378.5M68.1 378.5L70.7 384.0M70.7 384.0L73.5 389.6M73.5 389.6L76.3 395.4M76.3 395.4L79.1 401.3M79.1 401.3L82.0 407.3M82.0 407.3L85.0 413.4M85.0 413.4L88.1 419.7M88.1 419.7L91.2 426.2M91.2 426.2L94.4 432.7M94.4 432.7L97.6 439.5M97.6 439.5L101.0 446.4M101.0 446.4L104.4 453.4M104.4 453.4L107.9 460.6M107.9 460.6L111.5 468.0M111.5 468.0L115.2 475.6M321.1 455.8L311.1 459.1M311.1 459.1L301.0 462.4M301.0 462.4L290.8 465.7M290.8 465.7L280.4 469.1M50.7 389.1L53.2 394.8M53.2 394.8L55.8 400.7M55.8 400.7L58.5 406.7M58.5 406.7L61.2 412.8M61.2 412.8L64.0 419.1M64.0 419.1L66.8 425.5M66.8 425.5L69.7 432.1M69.7 432.1L72.7 438.8M72.7 438.8L75.7 445.7M75.7 445.7L78.9 452.7M78.9 452.7L82.0 459.9M82.0 459.9L85.3 467.3" stroke="#0c0c0c" stroke-opacity="1.00" stroke-width="1.0" fill="none"/><path d="M192.3 398.2L196.5 404.2M196.5 404.2L200.7 410.3M200.7 410.3L205.0 416.5M205.0 416.5L209.4 422.9M209.4 422.9L214.0 429.4M214.0 429.4L218.6 436.0M218.6 436.0L223.3 442.8M223.3 442.8L228.2 449.8M228.2 449.8L233.1 456.9M233.1 456.9L238.2 464.2M238.2 464.2L243.4 471.7" stroke="#c81414" stroke-opacity="1.00" stroke-width="1.15" fill="none"/><polygon points="92.3,191.5 206.0,172.3 234.0,173.8 280.6,207.6 130.0,236.8" fill="#7a7a7a" /><polygon points="92.3,191.5 130.0,236.8 140.7,440.4 105.0,383.0" fill="#5e5e5e" /><polygon points="130.0,236.8 280.6,207.6 280.0,307.5 276.0,307.5 271.8,403.0 155.0,444.4 153.0,435.0 140.7,440.4" fill="#cecece" /><polygon points="143.4,243.0 280.0,217.3 280.0,264.5 146.0,293.0" fill="#d3d3d3" /><polygon points="147.2,295.5 280.0,267.0 280.0,307.5 149.0,336.5" fill="#d3d3d3" /><polygon points="149.0,336.5 276.0,308.5 271.8,403.0 154.2,443.5" fill="#cdcdcd" /><polygon points="137.8,238.9 280.3,211.8 280.3,216.5 143.4,243.0" fill="#666" /><polygon points="137.8,238.9 143.4,243.0 146.0,292.0 147.2,294.5 148.3,323.0 141.2,325.0" fill="#616161" /><polygon points="144.3,370.0 150.7,370.0 153.6,436.5 146.5,437.0" fill="#646464" /><polygon points="146.0,293.0 280.0,264.5 280.0,267.0 147.2,295.5" fill="#7a7a7a" /><line x1="149.5" y1="336.3" x2="276" y2="308.3" stroke="#b5b5b5" stroke-width="0.8"/><defs><radialGradient id="kg" cx="0.6" cy="0.4" r="0.65"><stop offset="0" stop-color="#ececec"/><stop offset="0.55" stop-color="#b0b0b0"/><stop offset="1" stop-color="#3a3a3a"/></radialGradient></defs><circle cx="217.9" cy="258.4" r="4.6" fill="url(#kg)"/><path d="M213.3 261.0 Q212.7 253.8 217.7 253.5 L222.5 255.0" stroke="#2a2a2a" stroke-width="1.4" fill="none"/><circle cx="219.6" cy="304.8" r="4.6" fill="url(#kg)"/><path d="M215.0 307.4 Q214.4 300.2 219.4 299.9 L224.2 301.4" stroke="#2a2a2a" stroke-width="1.4" fill="none"/><circle cx="167.2" cy="393.6" r="4.6" fill="url(#kg)"/><path d="M162.6 396.2 Q162.0 389.0 167.0 388.7 L171.8 390.2" stroke="#2a2a2a" stroke-width="1.4" fill="none"/><rect x="5" y="60" width="284" height="160" fill="#212121" fill-opacity="0.72"/><text transform="translate(7,71.0) scale(1,0.9)" font-family="Liberation Mono" font-size="13.33" fill="#878787" xml:space="preserve"> Q: SSAO [OFF]</text><text transform="translate(7,84.0) scale(1,0.9)" font-family="Liberation Mono" font-size="13.33" fill="#878787" xml:space="preserve"> A: FXAA [OFF]</text><text transform="translate(7,97.0) scale(1,0.9)" font-family="Liberation Mono" font-size="13.33" fill="#878787" xml:space="preserve"> T: Tone mapping [OFF]</text><text transform="translate(7,110.0) scale(1,0.9)" font-family="Liberation Mono" font-size="13.33" fill="#878787" xml:space="preserve"> E: Edge visibility [OFF]</text><text transform="translate(7,123.0) scale(1,0.9)" font-family="Liberation Mono" font-size="13.33" fill="#878787" xml:space="preserve"> X: Axis [ON]</text><text transform="translate(7,136.0) scale(1,0.9)" font-family="Liberation Mono" font-size="13.33" fill="#878787" xml:space="preserve"> G: Grid [ON]</text><text transform="translate(7,162.0) scale(1,0.9)" font-family="Liberation Mono" font-size="13.33" fill="#878787" xml:space="preserve">   H  : Show\Hide info</text><text transform="translate(7,175.0) scale(1,0.9)" font-family="Liberation Mono" font-size="13.33" fill="#878787" xml:space="preserve">   I  : Create PNG image with alpha</text><text transform="translate(7,188.0) scale(1,0.9)" font-family="Liberation Mono" font-size="13.33" fill="#878787" xml:space="preserve"> ENTER: Reset camera</text><text transform="translate(7,201.0) scale(1,0.9)" font-family="Liberation Mono" font-size="13.33" fill="#878787" xml:space="preserve">Page Up  : Fov +5 (max 120)</text><text transform="translate(7,214.0) scale(1,0.9)" font-family="Liberation Mono" font-size="13.33" fill="#878787" xml:space="preserve">Page Down: Fov -5 (min 5)</text><line x1="394.8" y1="439.3" x2="394.8" y2="424.4" stroke="#00e000" stroke-width="1.2"/><line x1="394.8" y1="439.3" x2="378.2" y2="442.8" stroke="#1010ff" stroke-width="1.1"/><line x1="394.8" y1="439.3" x2="401.7" y2="444.6" stroke="#e00000" stroke-width="1.1"/><text x="399" y="422" font-family="Liberation Sans" font-style="italic" font-weight="bold" font-size="11" fill="#fff" stroke="#222" stroke-width="0.4" paint-order="stroke">Y</text><text x="385" y="436.5" font-family="Liberation Sans" font-style="italic" font-weight="bold" font-size="11" fill="#fff" stroke="#222" stroke-width="0.4" paint-order="stroke">Z</text><text x="404.5" y="440.5" font-family="Liberation Sans" font-style="italic" font-weight="bold" font-size="11" fill="#fff" stroke="#222" stroke-width="0.4" paint-order="stroke">X</text></svg><div style="position:absolute;left:428px;top:57px;width:489px;height:416px;background:#f0f0f0"></div><div style="position:absolute;left:435px;top:57px;width:40px;height:19px;background:#f0f0f0;border-top:1px solid #a0a0a0;border-left:1px solid #a0a0a0;border-right:1px solid #fff;border-bottom:1px solid #fff"><div style="position:absolute;left:0;top:0;right:0;bottom:0;border-top:1px solid #696969;border-left:1px solid #696969;border-right:1px solid #e3e3e3;border-bottom:1px solid #e3e3e3;background-color:#fff;background-image:linear-gradient(45deg,#f0f0f0 25%,transparent 25%,transparent 75%,#f0f0f0 75%),linear-gradient(45deg,#f0f0f0 25%,transparent 25%,transparent 75%,#f0f0f0 75%);background-size:2px 2px;background-position:0 0,1px 1px"></div></div><div class="t" style="left:442.16px;top:61.66px;font-size:10.5px;line-height:12.60px;color:#000;">Flags</div><div style="position:absolute;left:480px;top:57px;width:52px;height:19px;background:#f0f0f0;border-top:1px solid #fff;border-left:1px solid #fff;border-right:1px solid #696969;border-bottom:1px solid #696969"><div style="position:absolute;left:0;top:0;right:0;bottom:0;border-top:1px solid #e3e3e3;border-left:1px solid #e3e3e3;border-right:1px solid #a0a0a0;border-bottom:1px solid #a0a0a0"></div></div><div class="t" style="left:486.27px;top:60.76px;font-size:10.5px;line-height:12.60px;color:#000;">Surfaces</div><div style="position:absolute;left:537px;top:57px;width:40px;height:19px;background:#f0f0f0;border-top:1px solid #fff;border-left:1px solid #fff;border-right:1px solid #696969;border-bottom:1px solid #696969"><div style="position:absolute;left:0;top:0;right:0;bottom:0;border-top:1px solid #e3e3e3;border-left:1px solid #e3e3e3;border-right:1px solid #a0a0a0;border-bottom:1px solid #a0a0a0"></div></div><div class="t" style="left:543.11px;top:60.76px;font-size:10.5px;line-height:12.60px;color:#000;">Bones</div><div style="position:absolute;left:582px;top:57px;width:47px;height:19px;background:#f0f0f0;border-top:1px solid #fff;border-left:1px solid #fff;border-right:1px solid #696969;border-bottom:1px solid #696969"><div style="position:absolute;left:0;top:0;right:0;bottom:0;border-top:1px solid #e3e3e3;border-left:1px solid #e3e3e3;border-right:1px solid #a0a0a0;border-bottom:1px solid #a0a0a0"></div></div><div class="t" style="left:588.11px;top:60.76px;font-size:10.5px;line-height:12.60px;color:#000;">Motions</div><div style="position:absolute;left:634px;top:57px;width:67px;height:19px;background:#f0f0f0;border-top:1px solid #fff;border-left:1px solid #fff;border-right:1px solid #696969;border-bottom:1px solid #696969"><div style="position:absolute;left:0;top:0;right:0;bottom:0;border-top:1px solid #e3e3e3;border-left:1px solid #e3e3e3;border-right:1px solid #a0a0a0;border-bottom:1px solid #a0a0a0"></div></div><div class="t" style="left:640.48px;top:60.76px;font-size:10.5px;line-height:12.60px;color:#000;">Motion Refs</div><div style="position:absolute;left:706px;top:57px;width:58px;height:19px;background:#f0f0f0;border-top:1px solid #fff;border-left:1px solid #fff;border-right:1px solid #696969;border-bottom:1px solid #696969"><div style="position:absolute;left:0;top:0;right:0;bottom:0;border-top:1px solid #e3e3e3;border-left:1px solid #e3e3e3;border-right:1px solid #a0a0a0;border-bottom:1px solid #a0a0a0"></div></div><div class="t" style="left:712.36px;top:60.76px;font-size:10.5px;line-height:12.60px;color:#000;">User Data</div><div style="position:absolute;left:769px;top:57px;width:53px;height:19px;background:#f0f0f0;border-top:1px solid #fff;border-left:1px solid #fff;border-right:1px solid #696969;border-bottom:1px solid #696969"><div style="position:absolute;left:0;top:0;right:0;bottom:0;border-top:1px solid #e3e3e3;border-left:1px solid #e3e3e3;border-right:1px solid #a0a0a0;border-bottom:1px solid #a0a0a0"></div></div><div class="t" style="left:775.47px;top:60.76px;font-size:10.5px;line-height:12.60px;color:#000;">Lod Path</div><div style="position:absolute;left:437px;top:89px;width:471px;height:224px;border:1px solid #dcdcdc"></div><div style="position:absolute;left:444px;top:86px;width:79.3px;height:7px;background:#f0f0f0"></div><div class="t" style="left:446.00px;top:84.06px;font-size:10.5px;line-height:12.60px;color:#000;">Edit export flags</div><div style="position:absolute;left:443px;top:108px;width:190px;height:79px;border:1px solid #dcdcdc"></div><div style="position:absolute;left:450px;top:105px;width:67.7px;height:7px;background:#f0f0f0"></div><div class="t" style="left:452.00px;top:103.06px;font-size:10.5px;line-height:12.60px;color:#a0a0a0;">Motion export</div><div style="position:absolute;left:443px;top:201px;width:190px;height:106px;border:1px solid #dcdcdc"></div><div style="position:absolute;left:449px;top:198px;width:72.3px;height:7px;background:#f0f0f0"></div><div class="t" style="left:451.00px;top:196.06px;font-size:10.5px;line-height:12.60px;color:#000;">Object params</div><div style="position:absolute;left:641px;top:107px;width:261px;height:200px;border:1px solid #dcdcdc"></div><div style="position:absolute;left:648px;top:104px;width:64.7px;height:7px;background:#f0f0f0"></div><div class="t" style="left:650.00px;top:102.06px;font-size:10.5px;line-height:12.60px;color:#000;">Model export</div><div style="position:absolute;left:647px;top:265px;width:249px;height:35px;border:1px solid #dcdcdc"></div><div style="position:absolute;left:654px;top:262px;width:65.7px;height:7px;background:#f0f0f0"></div><div class="t" style="left:656.00px;top:260.06px;font-size:10.5px;line-height:12.60px;color:#000;">Smooth Type</div><svg style="position:absolute;left:448.6px;top:121.5px" width="14" height="14"><circle cx="7" cy="7" r="6" fill="#fff" stroke="#bcbcbc" stroke-width="1"/></svg><div class="t" style="left:468.00px;top:123.06px;font-size:10.5px;line-height:12.60px;color:#a0a0a0;">8 bit</div><svg style="position:absolute;left:448.6px;top:144.5px" width="14" height="14"><circle cx="7" cy="7" r="6" fill="#fff" stroke="#bcbcbc" stroke-width="1"/><circle cx="7" cy="7" r="3.1" fill="#c8c8c8"/></svg><div class="t" style="left:468.00px;top:146.06px;font-size:10.5px;line-height:12.60px;color:#a0a0a0;">16 bit</div><svg style="position:absolute;left:449px;top:167px" width="13" height="13"><rect x="0.5" y="0.5" width="12" height="12" fill="#fff" stroke="#bcbcbc" stroke-width="1"/><path d="M2.5 6.5 L5 9 L10.5 3.5" stroke="#bcbcbc" stroke-width="1.2" fill="none"/></svg><div class="t" style="left:468.00px;top:168.06px;font-size:10.5px;line-height:12.60px;color:#a0a0a0;">Use build-in motions</div><svg style="position:absolute;left:646.5px;top:121.6px" width="14" height="14"><circle cx="7" cy="7" r="6" fill="#fff" stroke="#333" stroke-width="1"/></svg><div class="t" style="left:666.00px;top:123.16px;font-size:10.5px;line-height:12.60px;color:#000;">HQ Geometry</div><svg style="position:absolute;left:646.5px;top:144.5px" width="14" height="14"><circle cx="7" cy="7" r="6" fill="#fff" stroke="#333" stroke-width="1"/><circle cx="7" cy="7" r="3.5" fill="#333"/></svg><div class="t" style="left:666.00px;top:146.06px;font-size:10.5px;line-height:12.60px;color:#000;">HQ Geometry+</div><svg style="position:absolute;left:647px;top:167px" width="13" height="13"><rect x="0.5" y="0.5" width="12" height="12" fill="#fff" stroke="#333" stroke-width="1"/></svg><div class="t" style="left:666.00px;top:168.26px;font-size:10.5px;line-height:12.60px;color:#000;">Make progressive meshes</div><svg style="position:absolute;left:647px;top:191px" width="13" height="13"><rect x="0.5" y="0.5" width="12" height="12" fill="#fff" stroke="#333" stroke-width="1"/></svg><div class="t" style="left:666.00px;top:191.86px;font-size:10.5px;line-height:12.60px;color:#000;">Make stripify meshes</div><svg style="position:absolute;left:647px;top:214px" width="13" height="13"><rect x="0.5" y="0.5" width="12" height="12" fill="#fff" stroke="#333" stroke-width="1"/></svg><div class="t" style="left:666.00px;top:214.66px;font-size:10.5px;line-height:12.60px;color:#000;">Optimize surfaces</div><svg style="position:absolute;left:647px;top:237px" width="13" height="13"><rect x="0.5" y="0.5" width="12" height="12" fill="#fff" stroke="#333" stroke-width="1"/></svg><div class="t" style="left:666.00px;top:237.56px;font-size:10.5px;line-height:12.60px;color:#000;">SoC bone export</div><svg style="position:absolute;left:657.7px;top:279.7px" width="14" height="14"><circle cx="7" cy="7" r="6" fill="#fff" stroke="#333" stroke-width="1"/><circle cx="7" cy="7" r="3.5" fill="#333"/></svg><div class="t" style="left:676.60px;top:281.26px;font-size:10.5px;line-height:12.60px;color:#000;">Auto</div><svg style="position:absolute;left:710px;top:279.7px" width="14" height="14"><circle cx="7" cy="7" r="6" fill="#fff" stroke="#333" stroke-width="1"/></svg><div class="t" style="left:729.80px;top:281.26px;font-size:10.5px;line-height:12.60px;color:#000;">SoC</div><svg style="position:absolute;left:757.9px;top:279.7px" width="14" height="14"><circle cx="7" cy="7" r="6" fill="#fff" stroke="#333" stroke-width="1"/></svg><div class="t" style="left:777.40px;top:281.26px;font-size:10.5px;line-height:12.60px;color:#000;">CS\CoP</div><svg style="position:absolute;left:828.3px;top:279.7px" width="14" height="14"><circle cx="7" cy="7" r="6" fill="#fff" stroke="#bcbcbc" stroke-width="1"/></svg><div class="t" style="left:848.50px;top:281.26px;font-size:10.5px;line-height:12.60px;color:#a0a0a0;">Normals</div><div class="t" style="left:448.50px;top:215.36px;font-size:10.5px;line-height:12.60px;color:#000;">Object type:</div><div style="position:absolute;left:521px;top:210px;width:106px;height:19px;background:#e1e1e1;border:1px solid #adadad"></div><div class="t" style="left:525.00px;top:215.36px;font-size:10.5px;line-height:12.60px;color:#000;">Dynamic</div><svg style="position:absolute;left:615.3px;top:217.6px" width="10" height="7"><path d="M0.5 1 L4.5 5 L8.5 1" stroke="#333" stroke-width="1" fill="none"/></svg><div class="t" style="left:448.50px;top:241.06px;font-size:10.5px;line-height:12.60px;color:#000;">Object scale:</div><div style="position:absolute;left:521px;top:237px;width:106px;height:18px;background:#fff;border:1px solid #7a7a7a"></div><div class="t" style="left:525.00px;top:241.06px;font-size:10.5px;line-height:12.60px;color:#000;">1</div><svg style="position:absolute;left:449px;top:266px" width="13" height="13"><rect x="0.5" y="0.5" width="12" height="12" fill="#fff" stroke="#333" stroke-width="1"/><path d="M2.5 6.5 L5 9 L10.5 3.5" stroke="#333" stroke-width="1.2" fill="none"/></svg><div class="t" style="left:468.00px;top:267.06px;font-size:10.5px;line-height:12.60px;color:#000;">Scale center of mass</div><div class="t" style="left:443.00px;top:318.56px;font-size:10.5px;line-height:12.60px;color:#000;">Log:</div><div style="position:absolute;left:437px;top:334px;width:469px;height:128px;background:#f0f0f0;border-top:2px solid #696969;border-left:2px solid #696969;border-right:2px solid #e3e3e3;border-bottom:2px solid #e3e3e3"></div><div style="position:absolute;left:437px;top:334px;width:471px;height:130px;border-top:1px solid #a0a0a0;border-left:1px solid #a0a0a0;border-right:1px solid #fff;border-bottom:1px solid #fff"></div><div style="position:absolute;left:0px;top:471px;width:917px;height:24px;background:#f0f0f0"></div><div style="position:absolute;left:0px;top:473px;width:917px;height:1px;background:#d7d7d7"></div><div class="t" style="left:3.50px;top:477.64px;font-size:12px;line-height:14.40px;color:#000;">File:</div><div class="t" style="left:31.80px;top:477.64px;font-size:12px;line-height:14.40px;color:#000;">Old_Box.object</div><div style="position:absolute;left:912px;top:482px;width:2px;height:2px;background:#a6a6a6"></div><div style="position:absolute;left:908px;top:486px;width:2px;height:2px;background:#a6a6a6"></div><div style="position:absolute;left:912px;top:486px;width:2px;height:2px;background:#a6a6a6"></div><div style="position:absolute;left:904px;top:490px;width:2px;height:2px;background:#a6a6a6"></div><div style="position:absolute;left:908px;top:490px;width:2px;height:2px;background:#a6a6a6"></div><div style="position:absolute;left:912px;top:490px;width:2px;height:2px;background:#a6a6a6"></div></body></html>
